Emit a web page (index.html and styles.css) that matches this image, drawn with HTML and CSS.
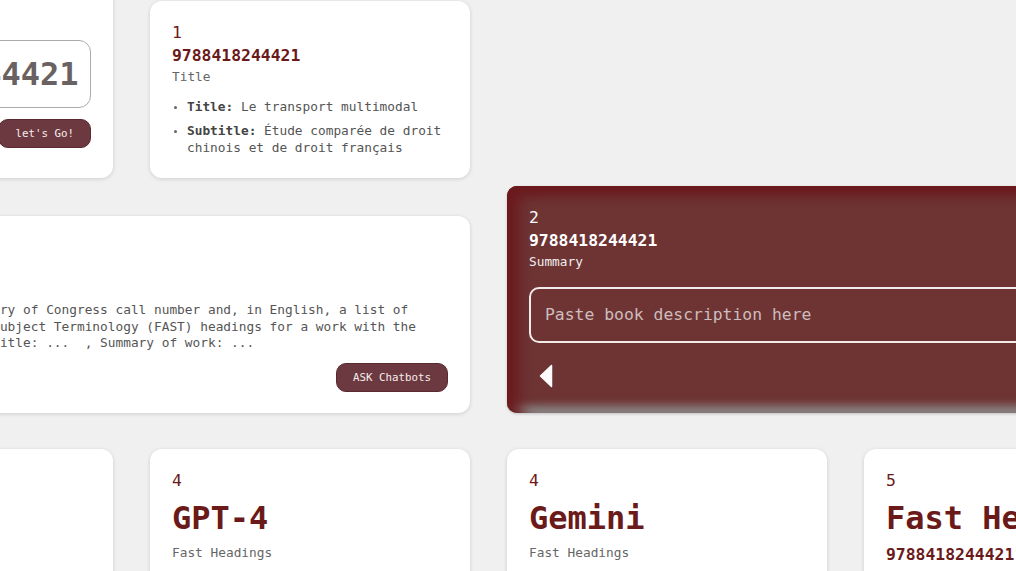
FILE: index.html
```html
<!DOCTYPE html>
<html lang="en">
<head>
<meta charset="utf-8">
<title>ISBN cataloguing board</title>
<link rel="stylesheet" href="styles.css">
</head>
<body>
<main class="board">
  <section class="card card-isbn">
    <div class="num">0</div>
    <div class="isbn">ISBN</div>
    <div class="label">Enter ISBN</div>
    <input class="isbn-input" type="text" value="9788418244421">
    <div class="actions"><button class="btn" type="button">let's Go!</button></div>
  </section>

  <section class="card">
    <div class="num">1</div>
    <div class="isbn">9788418244421</div>
    <div class="label">Title</div>
    <ul class="facts">
      <li><b>Title:</b> Le transport multimodal</li>
      <li><b>Subtitle:</b> Étude comparée de droit chinois et de droit français</li>
    </ul>
  </section>

  <section class="card prompt">
    <div class="num">3</div>
    <div class="isbn">9788418244421</div>
    <div class="label">Prompt</div>
    <p class="prompt-text">Please provide the Library of Congress call number and, in English, a list of<br>Faceted Application of Subject Terminology (FAST) headings for a work with the<br>following information. Title: ...&nbsp; , Summary of work: ...</p>
    <div class="actions"><button class="btn" type="button">ASK Chatbots</button></div>
  </section>

  <section class="card dark">
    <div class="num">2</div>
    <div class="isbn">9788418244421</div>
    <div class="label">Summary</div>
    <textarea class="summary-box" rows="1" placeholder="Paste book description here"></textarea>
    <div class="dark-foot">
      <svg class="back" width="14" height="24" viewBox="0 0 14 24" aria-hidden="true">
        <path d="M12.5 1.5 L12.5 22.5 L1.5 12 Z" fill="#ffffff" stroke="#ffffff" stroke-width="1.5" stroke-linejoin="round"/>
      </svg>
    </div>
  </section>

  <section class="card model r3">
    <div class="num">4</div>
    <div class="title-big">Claude</div>
    <div class="label">Fast Headings</div>
  </section>

  <section class="card model r3">
    <div class="num">4</div>
    <div class="title-big">GPT-4</div>
    <div class="label">Fast Headings</div>
  </section>

  <section class="card model r3">
    <div class="num">4</div>
    <div class="title-big">Gemini</div>
    <div class="label">Fast Headings</div>
  </section>

  <section class="card model r3">
    <div class="num">5</div>
    <div class="title-big">Fast Headings</div>
    <div class="isbn">9788418244421</div>
  </section>
</main>
</body>
</html>
```

FILE: styles.css
```css
* { box-sizing: border-box; }

html, body {
  margin: 0;
  height: 100%;
  overflow: hidden;
  background: #f0f0f0;
  font-family: "DejaVu Sans Mono", "Liberation Mono", monospace;
}

.board {
  display: grid;
  grid-template-columns: repeat(4, 320px);
  column-gap: 37px;
  row-gap: 36.5px;
  margin: -58px 0 0 -207px;
  align-items: end;
}

.card {
  background: #ffffff;
  border-radius: 12px;
  box-shadow: 0 1px 4px rgba(0, 0, 0, 0.14);
  padding: 22px;
}

.num {
  font-size: 16.4px;
  line-height: 20px;
  color: #6b1a1a;
}

.isbn {
  font-size: 16.4px;
  line-height: 20px;
  font-weight: 700;
  color: #6b1a1a;
  margin-top: 3px;
}

.label {
  font-size: 12.8px;
  line-height: 18px;
  color: #666666;
  margin-top: 2px;
}

.facts {
  margin: 12.5px 0 0;
  padding-left: 15px;
  font-size: 12.8px;
  line-height: 17px;
  color: #555555;
}

.facts li + li { margin-top: 7px; }
.facts b { color: #444444; }
.facts li::marker { color: #666666; font-size: 10px; }

.card-isbn { padding-bottom: 30.5px; }

.isbn-input {
  display: block;
  width: 100%;
  height: 68px;
  margin-top: 13px;
  border: 1px solid #ababab;
  border-radius: 12px;
  padding: 0 12px;
  font: 700 32px "DejaVu Sans Mono", monospace;
  color: #6a6262;
  background: #ffffff;
}

.actions {
  display: flex;
  justify-content: flex-end;
  margin-top: 11px;
}

.btn {
  height: 28.5px;
  padding: 0 16px;
  background: #6d3940;
  color: #f5eeee;
  border: 1px solid #5a2930;
  border-radius: 10px;
  font: 10.8px "DejaVu Sans Mono", monospace;
}

.prompt {
  grid-column: 1 / span 2;
  grid-row: 2;
  padding-bottom: 21px;
}

.prompt-text {
  margin: 1.5px 0 0;
  font-size: 12.8px;
  line-height: 16.5px;
  color: #555555;
  white-space: nowrap;
}

.prompt .actions { margin-top: 11.5px; }

.dark {
  grid-column: 3 / span 2;
  grid-row: 2;
  align-self: stretch;
  margin-top: -29px;
  border-radius: 10px;
  background: #6e3434;
  box-shadow:
    inset 20px 0 14px -8px #6b1a1d,
    inset 0 18px 12px -8px #6b1a1d,
    inset 0 -11px 8px -4px #8c8c8c,
    0 1px 3px rgba(0, 0, 0, 0.2);
}

.dark .num,
.dark .isbn { color: #ffffff; }
.dark .label { color: #eeeeee; }

.summary-box {
  display: block;
  width: 100%;
  height: 56px;
  margin-top: 16px;
  padding: 16px 14px;
  border: 2px solid #f3eaea;
  border-radius: 10px;
  background: transparent;
  font: 16.4px/20px "DejaVu Sans Mono", monospace;
  color: #ffffff;
  resize: none;
  overflow: hidden;
}

.summary-box::placeholder { color: #cdbdbd; }

.dark-foot {
  height: 30px;
  margin-top: 18px;
  padding-left: 10px;
  display: flex;
  align-items: center;
}

.r3 {
  grid-row: 3;
  align-self: start;
  min-height: 260px;
}

.title-big {
  font-size: 32px;
  line-height: 40px;
  font-weight: 700;
  color: #6b1a1a;
  margin-top: 7px;
  white-space: nowrap;
}

.model .label { margin-top: 6px; }
.model .isbn { margin-top: 7px; }
```
